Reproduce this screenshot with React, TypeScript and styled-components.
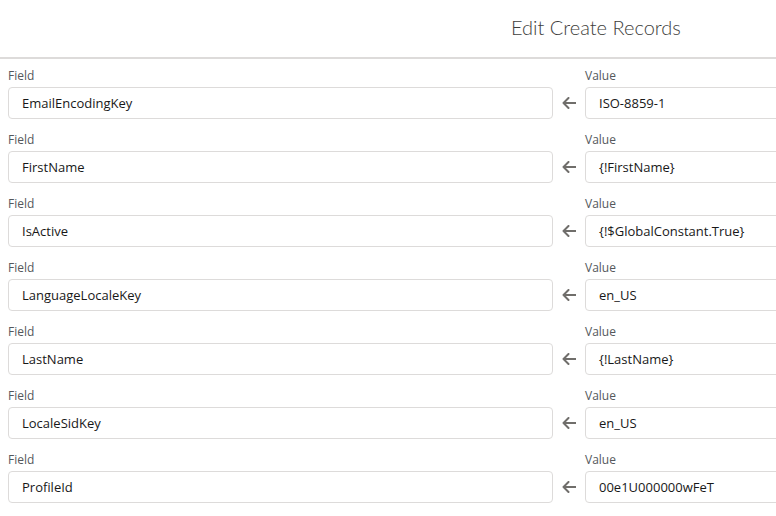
import React from "react";
import styled, { createGlobalStyle } from "styled-components";

const GlobalStyle = createGlobalStyle`
  body {
    margin: 0;
    background: #fff;
    font-family: "Open Sans", "Liberation Sans", sans-serif;
    color: #080707;
  }
`;

type Mapping = {
  field: string;
  value: string;
};

const mappings: Mapping[] = [
  { field: "EmailEncodingKey", value: "ISO-8859-1" },
  { field: "FirstName", value: "{!FirstName}" },
  { field: "IsActive", value: "{!$GlobalConstant.True}" },
  { field: "LanguageLocaleKey", value: "en_US" },
  { field: "LastName", value: "{!LastName}" },
  { field: "LocaleSidKey", value: "en_US" },
  { field: "ProfileId", value: "00e1U000000wFeT" },
];

const LeftArrow = () => (
  <svg width="14" height="12" viewBox="0 0 14 12" fill="none">
    <path
      d="M13.5 6H1.5M6.5 1L1.5 6l5 5"
      stroke="currentColor"
      strokeWidth="2"
      strokeLinecap="round"
      strokeLinejoin="round"
    />
  </svg>
);

const App = () => {
  return (
    <>
      <GlobalStyle />
      <Page>
        <Header>
          <Title>Edit Create Records</Title>
        </Header>
        <Body>
          {mappings.map((m) => (
            <Row key={m.field}>
              <Column>
                <Label>Field</Label>
                <Input>{m.field}</Input>
              </Column>
              <Arrow>
                <LeftArrow />
              </Arrow>
              <Column>
                <Label>Value</Label>
                <Input>{m.value}</Input>
              </Column>
            </Row>
          ))}
        </Body>
      </Page>
    </>
  );
};

const Page = styled.div`
  width: 776px;
  height: 516px;
  overflow: hidden;
`;
const Header = styled.div`
  height: 54px;
  border-bottom: 2px solid #dddbda;
  display: flex;
  align-items: center;
  padding: 0 0 3px 511px;
`;
const Title = styled.h2`
  margin: 0;
  font-family: Lato, "Open Sans", sans-serif;
  font-size: 20px;
  font-weight: 300;
  color: #3e3e3c;
  white-space: nowrap;
`;
const Body = styled.div`
  padding: 8px 0 0 8px;
  display: flex;
  flex-direction: column;
  gap: 12px;
`;
const Row = styled.div`
  display: grid;
  grid-template-columns: 545px 32px 545px;
  align-items: end;
`;
const Column = styled.div`
  display: flex;
  flex-direction: column;
  gap: 2px;
`;
const Label = styled.span`
  font-size: 12px;
  line-height: 18px;
  color: #54585c;
`;
const Input = styled.div`
  box-sizing: border-box;
  height: 32px;
  border: 1px solid #dddbda;
  border-radius: 4px;
  padding: 0 13px;
  display: flex;
  align-items: center;
  font-size: 13px;
  color: #181818;
  white-space: nowrap;
`;
const Arrow = styled.div`
  height: 32px;
  display: flex;
  align-items: center;
  justify-content: center;
  color: #706e6b;
`;

export default App;
